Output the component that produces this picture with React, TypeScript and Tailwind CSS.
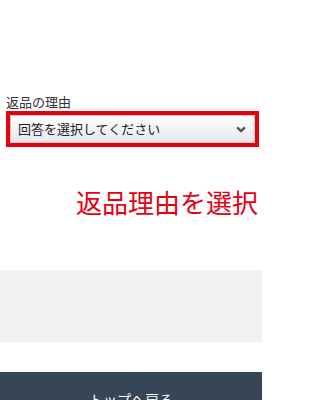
import React from "react";

function ChevronDown() {
  return (
    <svg width="10" height="7" viewBox="0 0 10 7" className="shrink-0">
      <polyline points="1.2,1.3 5,5 8.8,1.3" fill="none" stroke="#555" strokeWidth="2.4" />
    </svg>
  );
}

export default function App() {
  return (
    <div
      className="h-[400px] w-[262px] overflow-hidden bg-white"
      style={{ fontFamily: '"Liberation Sans", "Noto Sans CJK JP", sans-serif' }}
    >
      <div className="pt-[95px] pl-[6px]">
        <div className="text-[13px] leading-[16px] text-[#333]">返品の理由</div>
        <div className="w-[253px] border-4 border-[#e60012]">
          <div className="flex h-[28px] items-center justify-between border border-[#c8c8c8] bg-gradient-to-b from-white to-[#e6e7ec] pl-[7px] pr-[8px]">
            <span className="text-[13px] leading-none text-[#222]">回答を選択してください</span>
            <ChevronDown />
          </div>
        </div>
      </div>

      <div className="mt-[42px] pr-[4px] text-right text-[26px] leading-[30px] text-[#e60012]">
        返品理由を選択
      </div>

      <div className="mt-[51px] h-[72px] bg-[#f2f2f2]" />

      <div className="mt-[30px] bg-[#374656] py-[16px] text-center text-[14px] leading-[24px] text-white">
        トップへ戻る
      </div>
    </div>
  );
}
